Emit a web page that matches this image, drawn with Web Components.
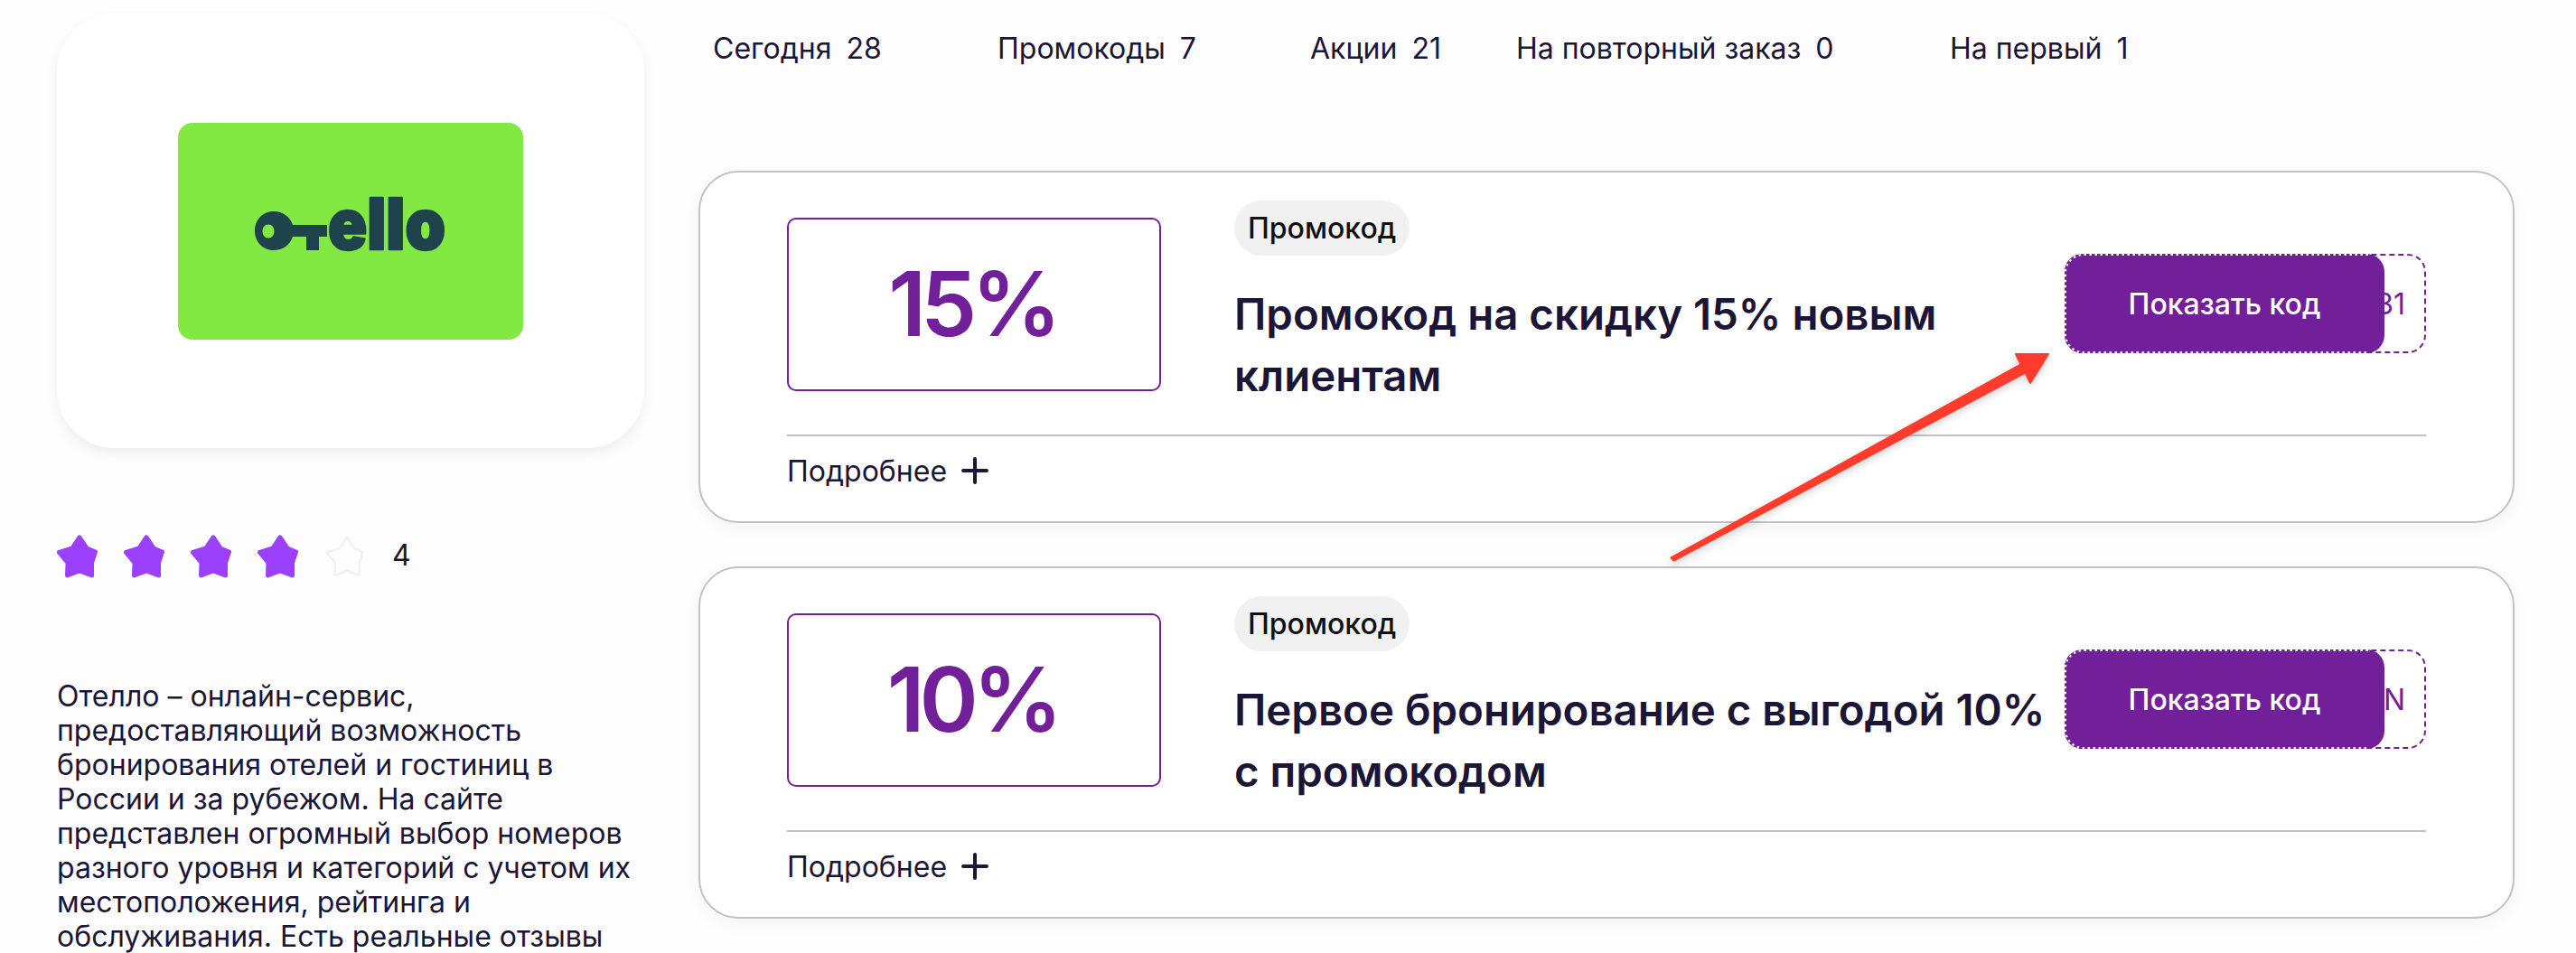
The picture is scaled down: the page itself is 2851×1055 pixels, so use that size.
<!DOCTYPE html>
<html lang="ru">
<head>
<meta charset="utf-8">
<title>Отелло</title>
<style>
html,body{margin:0;height:100%;overflow:hidden;background:#fdfdfd;font-family:Inter,"Noto Sans",sans-serif;color:#1b1537}
</style>
</head>
<body>
<promo-page>
  <brand-aside slot="aside">Отелло – онлайн-сервис, предоставляющий возможность бронирования отелей и гостиниц в России и за рубежом. На сайте представлен огромный выбор номеров разного уровня и категорий с учетом их местоположения, рейтинга и обслуживания. Есть реальные отзывы</brand-aside>
  <filter-nav>
    <filter-item w="315" n="28">Сегодня</filter-item>
    <filter-item w="346" n="7">Промокоды</filter-item>
    <filter-item w="228" n="21">Акции</filter-item>
    <filter-item w="480" n="0">На повторный заказ</filter-item>
    <filter-item n="1">На первый</filter-item>
  </filter-nav>
  <promo-card discount="15%" code="31">Промокод на скидку 15% новым клиентам</promo-card>
  <promo-card discount="10%" code="N">Первое бронирование с выгодой 10% с промокодом</promo-card>
</promo-page>
<arrow-note></arrow-note>
<script>
const def = (name, html, extra) => customElements.define(name, class extends HTMLElement {
  constructor(){ super(); this.attachShadow({mode:'open'}); }
  connectedCallback(){
    const a = n => this.getAttribute(n) || '';
    this.shadowRoot.innerHTML = html(a);
    if (extra) extra(this);
  }
});

def('promo-page', () => `<style>
:host{display:flex;align-items:flex-start;width:2851px;height:1055px;overflow:hidden}
.aside{flex:none;width:650px;margin-left:63px;margin-top:15px}
.main{flex:none;width:2010px;margin-left:60px;display:flex;flex-direction:column;gap:48px}
</style>
<div class="aside"><slot name="aside"></slot></div>
<div class="main"><slot></slot></div>`);

const star = (full) => `<svg width="46" height="48" viewBox="0 0 46 48" aria-hidden="true"><path d="M25 3L33 15L42.5 19L38.5 31L38.5 45L25 40L11.500 45L12 31L2.500 19.500L17 15Z" fill="${full?'#9b40fc':'none'}" stroke="${full?'#9b40fc':'#f2f2f2'}" stroke-width="${full?5:2.5}" stroke-linejoin="round"/></svg>`;

def('brand-logo', () => `<style>
:host{display:flex;align-items:center;justify-content:center;height:481px;background:#fff;border-radius:64px;box-shadow:0 6px 14px rgba(0,0,0,.06)}
.g{width:382px;height:240px;background:#82e942;border-radius:16px;display:flex}
svg{display:block}
</style>
<div class="g"><svg width="382" height="240" viewBox="0 0 382 240" aria-label="otello">
<g fill="#1f434d">
<path fill-rule="evenodd" d="M106 98C116 98 124 104 127 113H165V126H156V141H142V126H127C124 135 116 141 106 141C93 141 85 131 85 119.500C85 108 93 98 106 98ZM100 112.500C96 112.500 93.500 116 93.500 120C93.500 124 96 127.500 100 127.500C104 127.500 106.500 124 106.500 120C106.500 116 104 112.500 100 112.500Z"/>
<text x="166" y="140" font-family="Inter, sans-serif" font-weight="900" font-size="78" textLength="130" lengthAdjust="spacingAndGlyphs" stroke="#1f434d" stroke-width="2.5" stroke-linejoin="round">ello</text>
</g></svg></div>`);

def('star-rating', a => {
  const v = +a('value');
  return `<style>
:host{display:flex;align-items:center;height:48px;font-size:32px}
.s{display:flex;gap:28px}
svg{display:block}
b{font-weight:400;margin-left:29px;margin-top:-4px}
</style><div class="s">${[1,2,3,4,5].map(i=>star(i<=v)).join('')}</div><b>${v}</b>`;
});

def('brand-aside', () => `<style>
:host{display:block}
star-rating{margin-top:96px}
p{margin:112px 0 0;font-size:32px;line-height:38px;color:#1b1537}
</style>
<brand-logo></brand-logo>
<star-rating value="4"></star-rating>
<p><slot></slot></p>`);

def('filter-nav', () => `<style>
:host{display:flex;align-items:center;height:108px;padding-left:16px;margin-bottom:33px}
</style><slot></slot>`);

def('filter-item', a => `<style>
:host{display:block;flex:none;font-size:32px;line-height:38px;color:#1b1537;white-space:pre;${a('w')?`width:${a('w')}px`:''}}
span{margin-left:16px}
</style><slot></slot><span>${a('n')}</span>`);

def('code-reveal', a => `<style>
:host{display:block;flex:none;width:400px;height:110px;box-sizing:border-box;border:2px dashed #722099;border-radius:20px;position:relative;background:#fff;color:#722099;font-size:32px;margin-top:-1px}
.c{display:flex;align-items:center;justify-content:flex-end;height:100%;padding-right:21px}
.b{position:absolute;left:-2px;top:-2px;bottom:-2px;width:354px;background:#722099;color:#fff;border-radius:20px;display:flex;align-items:center;justify-content:center;font-weight:500}
svg{position:absolute;left:0;top:0;display:block}
</style><div class="c">${a('code')}</div><div class="b"><svg width="354" height="110" viewBox="0 0 354 110" aria-hidden="true"><path d="M336 1H21A20 20 0 0 0 1 21V89A20 20 0 0 0 21 109H336" fill="none" stroke="#fff" stroke-width="2" stroke-dasharray="2.500 3.500"/></svg>Показать код</div>`);

def('promo-card', a => `<style>
:host{display:block;box-sizing:border-box;height:390px;background:#fff;border:2px solid #c2c2c2;border-radius:44px;padding:31px 96px 0 96px;box-shadow:0 6px 20px rgba(0,0,0,.035)}
.row{display:flex;align-items:center;height:229px}
.d{flex:none;box-sizing:border-box;width:414px;height:192px;border:2px solid #722099;border-radius:10px;display:flex;align-items:center;justify-content:center;font-size:99px;font-weight:600;letter-spacing:-6px;color:#722099;padding:0 4px 2px 0}
.t{flex:none;width:919px;margin-left:81px;align-self:flex-start}
.pill{display:inline-block;height:61px;line-height:61px;padding:0 15px;background:#f1f1f1;border-radius:31px;font-size:32px;font-weight:500;color:#111}
h2{margin:31px 0 0;font-size:47.4px;line-height:68px;font-weight:600;color:#1b1537}
hr{border:0;height:2px;background:#c2c2c2;margin:30px 0 0}
.m{display:flex;align-items:center;gap:16px;height:76px;font-size:32px;color:#1b1537}
svg{display:block}
</style>
<div class="row">
  <div class="d">${a('discount')}</div>
  <div class="t"><span class="pill">Промокод</span><h2><slot></slot></h2></div>
  <code-reveal code="${a('code')}"></code-reveal>
</div>
<hr>
<div class="m">Подробнее<svg width="30" height="30" viewBox="0 0 30 30" aria-hidden="true"><path d="M15 2V28M2 15H28" stroke="#1b1537" stroke-width="4" stroke-linecap="round"/></svg></div>`);

def('arrow-note', () => `<style>
:host{position:absolute;left:0;top:0;width:2851px;height:1055px;pointer-events:none}
svg{display:block}
</style>
<svg width="2851" height="1055" viewBox="0 0 2851 1055" aria-hidden="true">
<defs><filter id="s" x="-5%" y="-5%" width="110%" height="115%"><feDropShadow dx="0" dy="3" stdDeviation="4" flood-color="#000" flood-opacity=".18"/></filter></defs>
<path filter="url(#s)" d="M1849.500 617.500L2236.500 403.500L2231 392L2267 392L2247 424L2241.500 412.500L1852.500 620.500Z" fill="#ff3b2d" stroke="#ff3b2d" stroke-width="2" stroke-linejoin="round"/>
</svg>`);
</script>
</body>
</html>
